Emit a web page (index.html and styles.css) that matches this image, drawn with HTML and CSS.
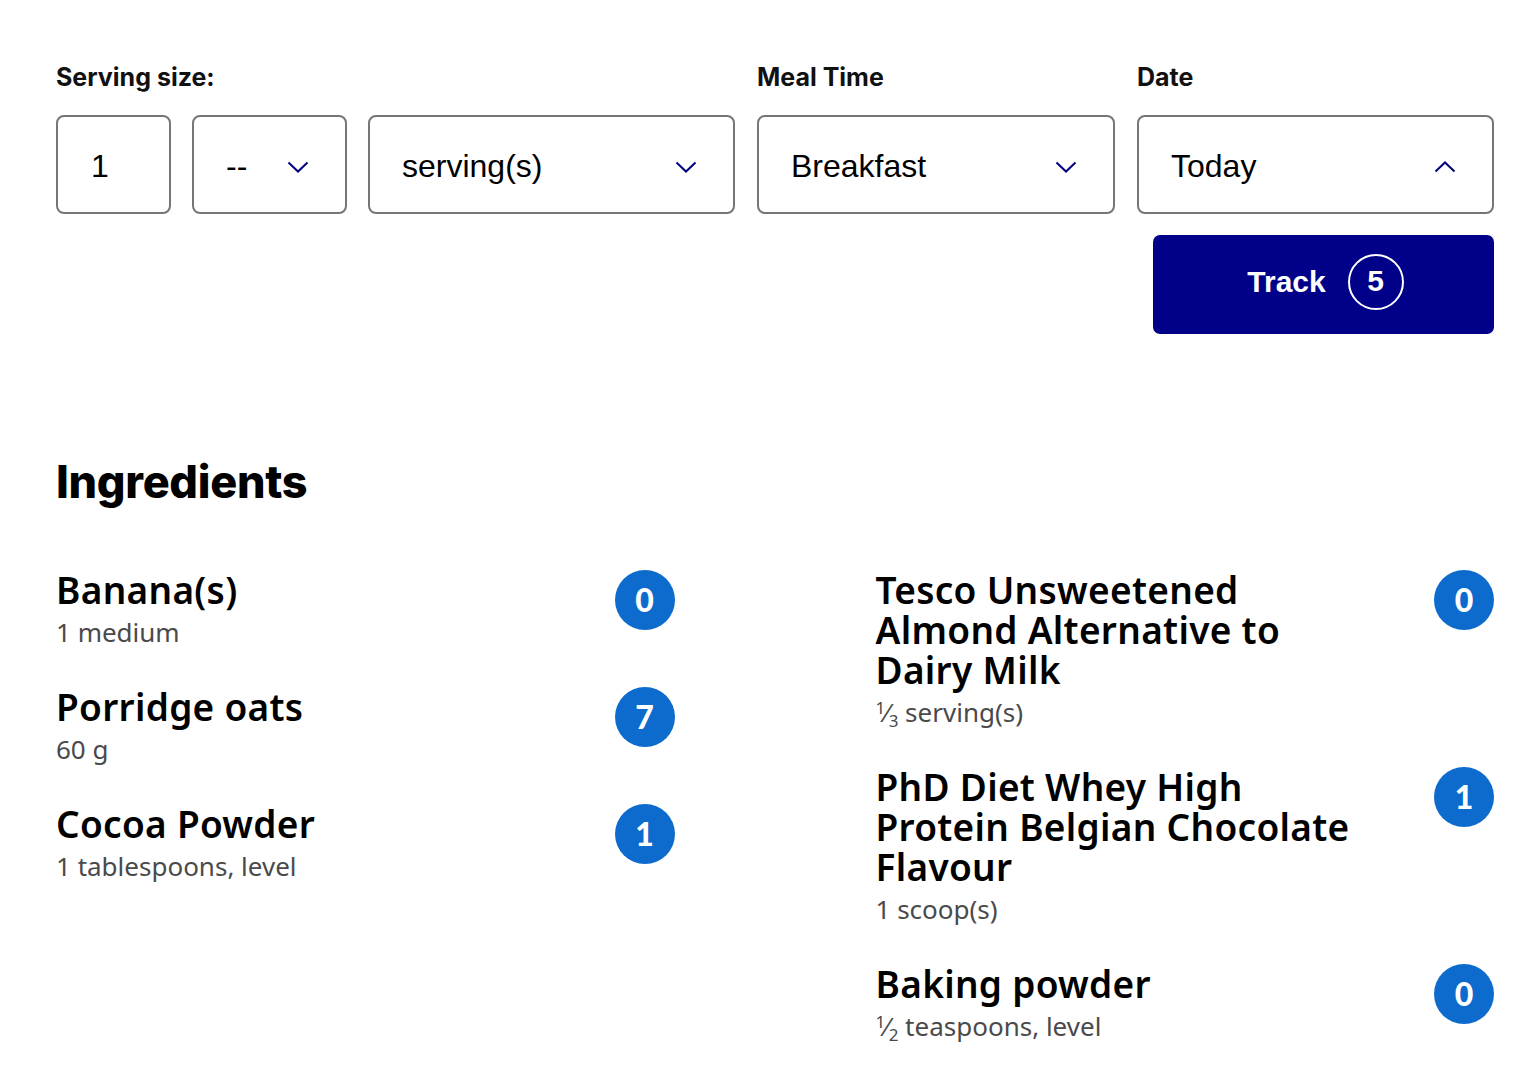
FILE: index.html
```html
<!DOCTYPE html>
<html lang="en">
<head>
<meta charset="utf-8">
<title>Recipe tracking</title>
<link rel="stylesheet" href="styles.css">
</head>
<body>
<main class="page">
  <section class="form">
    <div class="fields">
      <div class="group group-serving">
        <label class="label">Serving size:</label>
        <div class="boxes">
          <div class="box box-qty"><span class="value">1</span></div>
          <div class="box box-frac"><span class="value">--</span>
            <svg class="chev" width="22" height="12" viewBox="0 0 22 12"><path d="M1.5 1.5 L11 10.5 L20.5 1.5" fill="none" stroke="#000080" stroke-width="2"/></svg>
          </div>
          <div class="box box-unit"><span class="value">serving(s)</span>
            <svg class="chev" width="22" height="12" viewBox="0 0 22 12"><path d="M1.5 1.5 L11 10.5 L20.5 1.5" fill="none" stroke="#000080" stroke-width="2"/></svg>
          </div>
        </div>
      </div>
      <div class="group group-meal">
        <label class="label">Meal Time</label>
        <div class="box"><span class="value">Breakfast</span>
          <svg class="chev" width="22" height="12" viewBox="0 0 22 12"><path d="M1.5 1.5 L11 10.5 L20.5 1.5" fill="none" stroke="#000080" stroke-width="2"/></svg>
        </div>
      </div>
      <div class="group group-date">
        <label class="label">Date</label>
        <div class="box"><span class="value">Today</span>
          <svg class="chev" width="22" height="12" viewBox="0 0 22 12"><path d="M1.5 10.5 L11 1.5 L20.5 10.5" fill="none" stroke="#000080" stroke-width="2"/></svg>
        </div>
      </div>
    </div>
    <div class="actions">
      <button class="track">Track <span class="count">5</span></button>
    </div>
  </section>

  <section class="ingredients">
    <h2 class="title">Ingredients</h2>
    <div class="cols">
      <div class="col">
        <div class="item">
          <div class="info"><div class="name">Banana(s)</div><div class="amount">1 medium</div></div>
          <span class="badge">0</span>
        </div>
        <div class="item">
          <div class="info"><div class="name">Porridge oats</div><div class="amount">60 g</div></div>
          <span class="badge">7</span>
        </div>
        <div class="item">
          <div class="info"><div class="name">Cocoa Powder</div><div class="amount">1 tablespoons, level</div></div>
          <span class="badge">1</span>
        </div>
      </div>
      <div class="col">
        <div class="item">
          <div class="info"><div class="name">Tesco Unsweetened Almond Alternative to Dairy Milk</div><div class="amount"><sup>1</sup>⁄<sub>3</sub> serving(s)</div></div>
          <span class="badge">0</span>
        </div>
        <div class="item">
          <div class="info"><div class="name">PhD Diet Whey High Protein Belgian Chocolate Flavour</div><div class="amount">1 scoop(s)</div></div>
          <span class="badge">1</span>
        </div>
        <div class="item">
          <div class="info"><div class="name">Baking powder</div><div class="amount"><sup>1</sup>⁄<sub>2</sub> teaspoons, level</div></div>
          <span class="badge">0</span>
        </div>
      </div>
    </div>
  </section>
</main>
</body>
</html>
```

FILE: styles.css
```css
* { box-sizing: border-box; }
html, body { margin: 0; padding: 0; background: #fff; }
body { font-family: "Liberation Sans", Arial, sans-serif; color: #000; }

.page { padding: 62px 26px 0 56px; }

.fields { display: flex; gap: 22px; }
.group { display: flex; flex-direction: column; }
.group-serving { flex: 0 0 679px; }
.group-meal { flex: 0 0 358px; }
.group-date { flex: 1 1 auto; }

.label {
  font-family: Inter, sans-serif;
  font-weight: 700;
  font-size: 25px;
  line-height: 30px;
  margin-bottom: 23px;
  color: #111;
}

.boxes { display: flex; gap: 21px; }

.box {
  height: 99px;
  border: 2px solid #767676;
  border-radius: 8px;
  display: flex;
  align-items: center;
  justify-content: space-between;
  padding: 2px 36px 0 32px;
  background: #fff;
}
.box-qty { flex: 0 0 115px; padding-left: 33px; }
.box-frac { flex: 0 0 155px; padding-left: 32px; }
.box-unit { flex: 1 1 auto; }

.value { font-size: 32px; line-height: 36px; color: #000; }
.chev { flex: 0 0 auto; margin-top: 2px; }

.actions { display: flex; justify-content: flex-end; margin-top: 21px; }
.track {
  width: 341px;
  height: 99px;
  border: 0;
  border-radius: 7px;
  background: #000088;
  color: #fff;
  font-family: "Liberation Sans", Arial, sans-serif;
  font-weight: 700;
  font-size: 30px;
  display: flex;
  align-items: center;
  justify-content: center;
  gap: 22px;
  padding: 0 0 6px 4px;
}
.count {
  width: 56px;
  height: 56px;
  border: 2px solid #fff;
  border-radius: 50%;
  display: flex;
  align-items: center;
  justify-content: center;
  font-size: 30px;
  padding-bottom: 1px;
}

.ingredients { margin-top: 120px; }
.title {
  margin: 0 0 60px;
  font-family: Inter, sans-serif;
  font-weight: 800;
  font-size: 45px;
  line-height: 56px;
  letter-spacing: -0.3px;
  color: #000;
}

.cols { display: grid; grid-template-columns: 1fr 1fr; column-gap: 201px; }
.col { display: flex; flex-direction: column; gap: 36px; }
.item { display: flex; align-items: flex-start; justify-content: space-between; }
.info { flex: 1 1 auto; padding-right: 72px; }
.name {
  font-family: "Noto Sans", sans-serif;
  font-weight: 600;
  font-size: 37px;
  line-height: 40px;
  letter-spacing: 0.3px;
  color: #000;
}
.amount {
  font-family: "Noto Sans", sans-serif;
  font-size: 26px;
  line-height: 38px;
  margin-top: 3px;
  color: #4a4a4a;
}
.amount sup, .amount sub { font-size: 17px; line-height: 0; }
.amount sup { vertical-align: 8px; }
.amount sub { vertical-align: -5px; }

.badge {
  flex: 0 0 60px;
  width: 60px;
  height: 60px;
  border-radius: 50%;
  background: #0c6bcd;
  color: #fff;
  display: flex;
  align-items: center;
  justify-content: center;
  font-family: Lato, sans-serif;
  font-weight: 900;
  font-size: 32px;
  padding-bottom: 2px;
}
```
